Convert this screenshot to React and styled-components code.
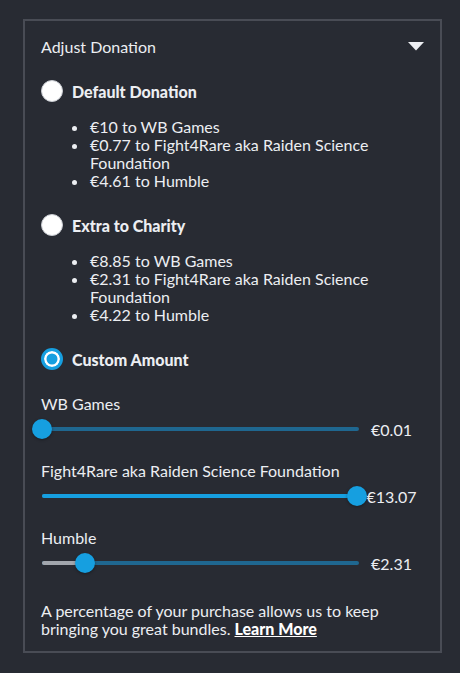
import React from 'react'
import styled, {createGlobalStyle} from 'styled-components'

const Global = createGlobalStyle`
  html, body {
    margin: 0;
    background: #282b33;
  }
  body {
    font-family: Lato, "Open Sans", sans-serif;
    color: #eceef2;
  }
`;

const S = {
  Page: styled.div`
    padding: 19px 18px 18px 23px;
  `,

  Box: styled.div`
    border: 2px solid #494c55;
    padding: 15px 16px 13px 16px;
    display: flex;
    flex-direction: column;
  `,

  Header: styled.div`
    display: flex;
    justify-content: space-between;
    align-items: center;
    height: 20px;
    font-size: 16px;
    margin-bottom: 24px;
  `,

  Caret: styled.svg`
    margin-right: 0px;
  `,

  Option: styled.label`
    display: flex;
    align-items: center;
    gap: 9px;
    height: 22px;
    font-size: 16px;
    font-weight: 900;
  `,

  Radio: styled.span`
    width: 22px;
    height: 22px;
    box-sizing: border-box;
    border-radius: 50%;
    background: ${p => p.checked ? '#169fe0' : '#ffffff'};
    border: ${p => p.checked ? '3px solid #169fe0' : '1.5px solid #c9ccd2'};
    box-shadow: ${p => p.checked ? 'inset 0 0 0 2.5px #ffffff' : 'none'};
  `,

  List: styled.ul`
    margin: 16px 0 24px 0;
    padding-left: 47px;
    font-size: 16px;
    line-height: 18px;
    li { padding-left: 2px; }
    li::marker { font-size: 14px; }
  `,

  SliderGroup: styled.div`
    display: flex;
    flex-direction: column;
    margin-top: ${p => p.first ? '24px' : '22px'};
  `,

  SliderLabel: styled.div`
    font-size: 16px;
    line-height: 20px;
    margin-bottom: 5px;
  `,

  SliderRow: styled.div`
    display: flex;
    align-items: center;
    height: 20px;
  `,

  Track: styled.div`
    position: relative;
    width: 317px;
    height: 4px;
    margin-left: 1px;
    border-radius: 2px;
    background: #1f6790;
  `,

  Fill: styled.div`
    height: 100%;
    border-radius: 2px;
    background: ${p => p.color};
  `,

  Thumb: styled.span`
    position: absolute;
    top: 50%;
    width: 20px;
    height: 20px;
    border-radius: 50%;
    background: #169fe0;
    transform: translate(-50%, -50%);
    box-shadow: 0 1px 3px rgba(0, 0, 0, 0.35);
  `,

  Value: styled.div`
    flex: 1;
    text-align: center;
    font-size: 16px;
  `,

  Note: styled.p`
    margin: 29px 0 0 0;
    font-size: 16px;
    line-height: 18px;
  `,

  Link: styled.a`
    color: #ffffff;
    font-weight: 900;
    text-decoration: underline;
    text-underline-offset: 1px;
  `,
}

const sliders = [
  {label: 'WB Games', pct: 0, value: '€0.01', fill: '#1f6790'},
  {label: 'Fight4Rare aka Raiden Science Foundation', pct: 99.4, value: '€13.07', fill: '#169fe0'},
  {label: 'Humble', pct: 13.5, value: '€2.31', fill: '#a2a6ad'},
]

function Slider({label, pct, value, fill, first}) {
  return (
    <S.SliderGroup first={first}>
      <S.SliderLabel>{label}</S.SliderLabel>
      <S.SliderRow>
        <S.Track>
          <S.Fill color={fill} style={{width: pct + '%'}} />
          <S.Thumb style={{left: pct + '%'}} />
        </S.Track>
        <S.Value>{value}</S.Value>
      </S.SliderRow>
    </S.SliderGroup>
  )
}

export default function App() {
  return (
    <S.Page>
      <Global />
      <S.Box>
        <S.Header>
          <span>Adjust Donation</span>
          <S.Caret width="16" height="9" viewBox="0 0 16 9">
            <path d="M0 0 H16 L8 8.5 Z" fill="#eceef2" />
          </S.Caret>
        </S.Header>

        <S.Option><S.Radio />Default Donation</S.Option>
        <S.List>
          <li>€10 to WB Games</li>
          <li>€0.77 to Fight4Rare aka Raiden Science Foundation</li>
          <li>€4.61 to Humble</li>
        </S.List>

        <S.Option><S.Radio />Extra to Charity</S.Option>
        <S.List>
          <li>€8.85 to WB Games</li>
          <li>€2.31 to Fight4Rare aka Raiden Science Foundation</li>
          <li>€4.22 to Humble</li>
        </S.List>

        <S.Option><S.Radio checked />Custom Amount</S.Option>

        {sliders.map((s, i) => <Slider key={s.label} first={i === 0} {...s} />)}

        <S.Note>
          A percentage of your purchase allows us to keep bringing you great bundles. <S.Link href="#">Learn More</S.Link>
        </S.Note>
      </S.Box>
    </S.Page>
  )
}
